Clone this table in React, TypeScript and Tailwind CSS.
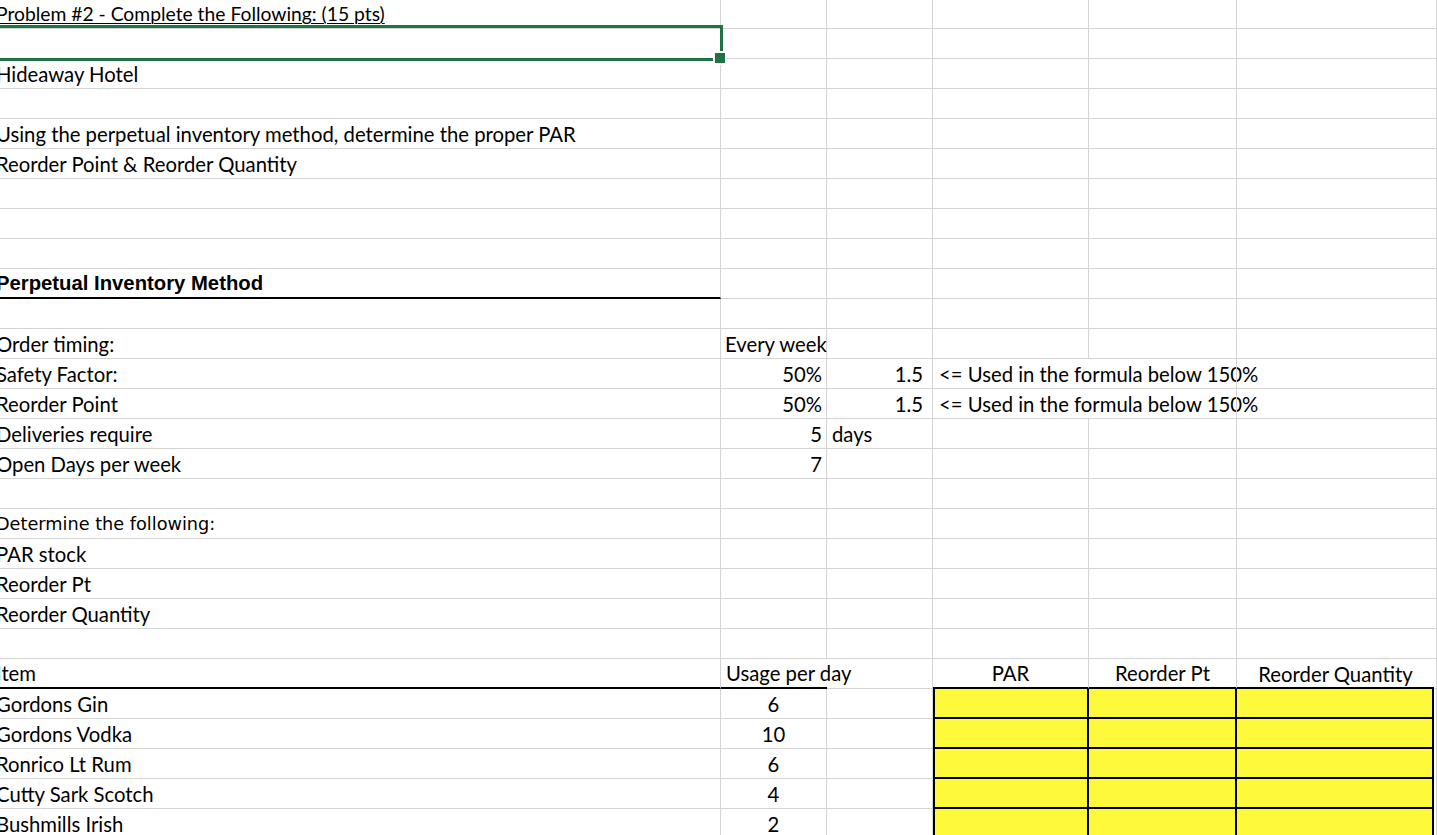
import type { ReactNode } from 'react';

const calibri = "font-['Lato','Open_Sans',sans-serif] text-[20.3px]";
const grid = 'border-[#d4d4d4]';

type CellProps = {
  w: string;
  children?: ReactNode;
  align?: 'left' | 'right' | 'center';
  noLine?: boolean;
  className?: string;
};

const Cell = ({ w, children, align = 'left', noLine, className = '' }: CellProps) => {
  const justify =
    align === 'right' ? 'justify-end pr-[4px]' : align === 'center' ? 'justify-center' : 'justify-start pl-[5px]';
  return (
    <div
      className={`${w} shrink-0 h-full flex items-end ${justify} border-b ${noLine ? '' : 'border-r'} ${grid} ${className}`}
    >
      {children !== undefined && (
        <span className="whitespace-nowrap leading-[22px] pb-[3px]">{children}</span>
      )}
    </div>
  );
};

const Blank = () => (
  <>
    <Cell w="w-[106px]" />
    <Cell w="w-[106px]" />
    <Cell w="w-[156px]" />
    <Cell w="w-[148px]" />
    <Cell w="w-[200px]" />
  </>
);

const SheetRow = ({
  first,
  a,
  aClass = '',
  children,
}: {
  first?: boolean;
  a?: ReactNode;
  aClass?: string;
  children?: ReactNode;
}) => (
  <div className={`flex ${first ? 'h-[29px]' : 'h-[30px]'}`}>
    <div className={`w-[721px] shrink-0 h-full flex items-end overflow-hidden border-b border-r ${grid} ${aClass}`}>
      {a !== undefined && <span className="whitespace-nowrap leading-[22px] pb-[3px] -ml-[4px]">{a}</span>}
    </div>
    {children ?? <Blank />}
  </div>
);

const items: [string, number][] = [
  ['Gordons Gin', 6],
  ['Gordons Vodka', 10],
  ['Ronrico Lt Rum', 6],
  ['Cutty Sark Scotch', 4],
  ['Bushmills Irish', 2],
];

const yellow = 'bg-[#fff93b] border-b-2 border-r-2 border-black';

export default function App() {
  const note = '<= Used in the formula below 150%';
  return (
    <div className={`relative h-screen w-full overflow-hidden bg-white text-black ${calibri}`}>
      <SheetRow
        first
        a={
          <span className="text-[19.3px] underline underline-offset-[2px] decoration-1">
            Problem #2 - Complete the Following: (15 pts)
          </span>
        }
      />
      <SheetRow />
      <SheetRow a="Hideaway Hotel" />
      <SheetRow />
      <SheetRow a="Using the perpetual inventory method, determine the proper PAR" />
      <SheetRow a="Reorder Point & Reorder Quantity" />
      <SheetRow />
      <SheetRow />
      <SheetRow />
      <SheetRow
        a={<span className="font-['Liberation_Sans',Arial,sans-serif] text-[20.3px] font-bold">Perpetual Inventory Method</span>}
        aClass="!border-b-2 !border-b-black"
      />
      <SheetRow />
      <SheetRow a="Order timing:">
        <Cell w="w-[106px]">
          <span className="-ml-[1px]">Every week</span>
        </Cell>
        <Cell w="w-[106px]" />
        <Cell w="w-[156px]" />
        <Cell w="w-[148px]" />
        <Cell w="w-[200px]" />
      </SheetRow>
      {['Safety Factor:', 'Reorder Point'].map((label) => (
        <SheetRow key={label} a={label}>
          <Cell w="w-[106px]" align="right">50%</Cell>
          <Cell w="w-[106px]" align="right" className="!pr-[9px]">1.5</Cell>
          <Cell w="w-[156px]" noLine className="!pl-[6px]">{note}</Cell>
          <Cell w="w-[148px]" />
          <Cell w="w-[200px]" />
        </SheetRow>
      ))}
      <SheetRow a="Deliveries require">
        <Cell w="w-[106px]" align="right">5</Cell>
        <Cell w="w-[106px]">days</Cell>
        <Cell w="w-[156px]" />
        <Cell w="w-[148px]" />
        <Cell w="w-[200px]" />
      </SheetRow>
      <SheetRow a="Open Days per week">
        <Cell w="w-[106px]" align="right">7</Cell>
        <Cell w="w-[106px]" />
        <Cell w="w-[156px]" />
        <Cell w="w-[148px]" />
        <Cell w="w-[200px]" />
      </SheetRow>
      <SheetRow />
      <SheetRow a={<span className="font-['DejaVu_Sans',Verdana,sans-serif] text-[17.7px]">Determine the following:</span>} />
      <SheetRow a="PAR stock" />
      <SheetRow a="Reorder Pt" />
      <SheetRow a="Reorder Quantity" />
      <SheetRow />
      <SheetRow a="Item" aClass="!border-b-2 !border-b-black">
        <Cell w="w-[106px]" noLine className="!border-b-2 !border-b-black">Usage per day</Cell>
        <Cell w="w-[106px]" />
        <Cell w="w-[156px]" align="center" className="!border-b-2 !border-b-black">PAR</Cell>
        <Cell w="w-[148px]" align="center" className="!border-b-2 !border-b-black">Reorder Pt</Cell>
        <Cell w="w-[200px]" align="center">
          <span className="pr-[2px]">Reorder Quantity</span>
        </Cell>
      </SheetRow>
      {items.map(([name, qty]) => (
        <SheetRow key={name} a={name}>
          <Cell w="w-[106px]" align="center">{qty}</Cell>
          <Cell w="w-[106px]" />
          <div className={`w-[156px] shrink-0 h-full border-l-2 ${yellow}`} />
          <div className={`w-[148px] shrink-0 h-full ${yellow}`} />
          <div className={`w-[200px] shrink-0 h-full flex border-r ${grid}`}>
            <div className={`w-[197px] h-full ${yellow}`} />
          </div>
        </SheetRow>
      ))}

      {/* header F bottom border sits only over the yellow part */}
      <div className="absolute left-[1237px] top-[687px] w-[197px] h-[2px] bg-black" />

      {/* active cell selection */}
      <div className="absolute left-[-4px] top-[25px] w-[727px] h-[36px] border-[3px] border-[#217346]" />
      <div className="absolute left-[713px] top-[51px] w-[14px] h-[14px] bg-[#217346] border-2 border-white" />
    </div>
  );
}
